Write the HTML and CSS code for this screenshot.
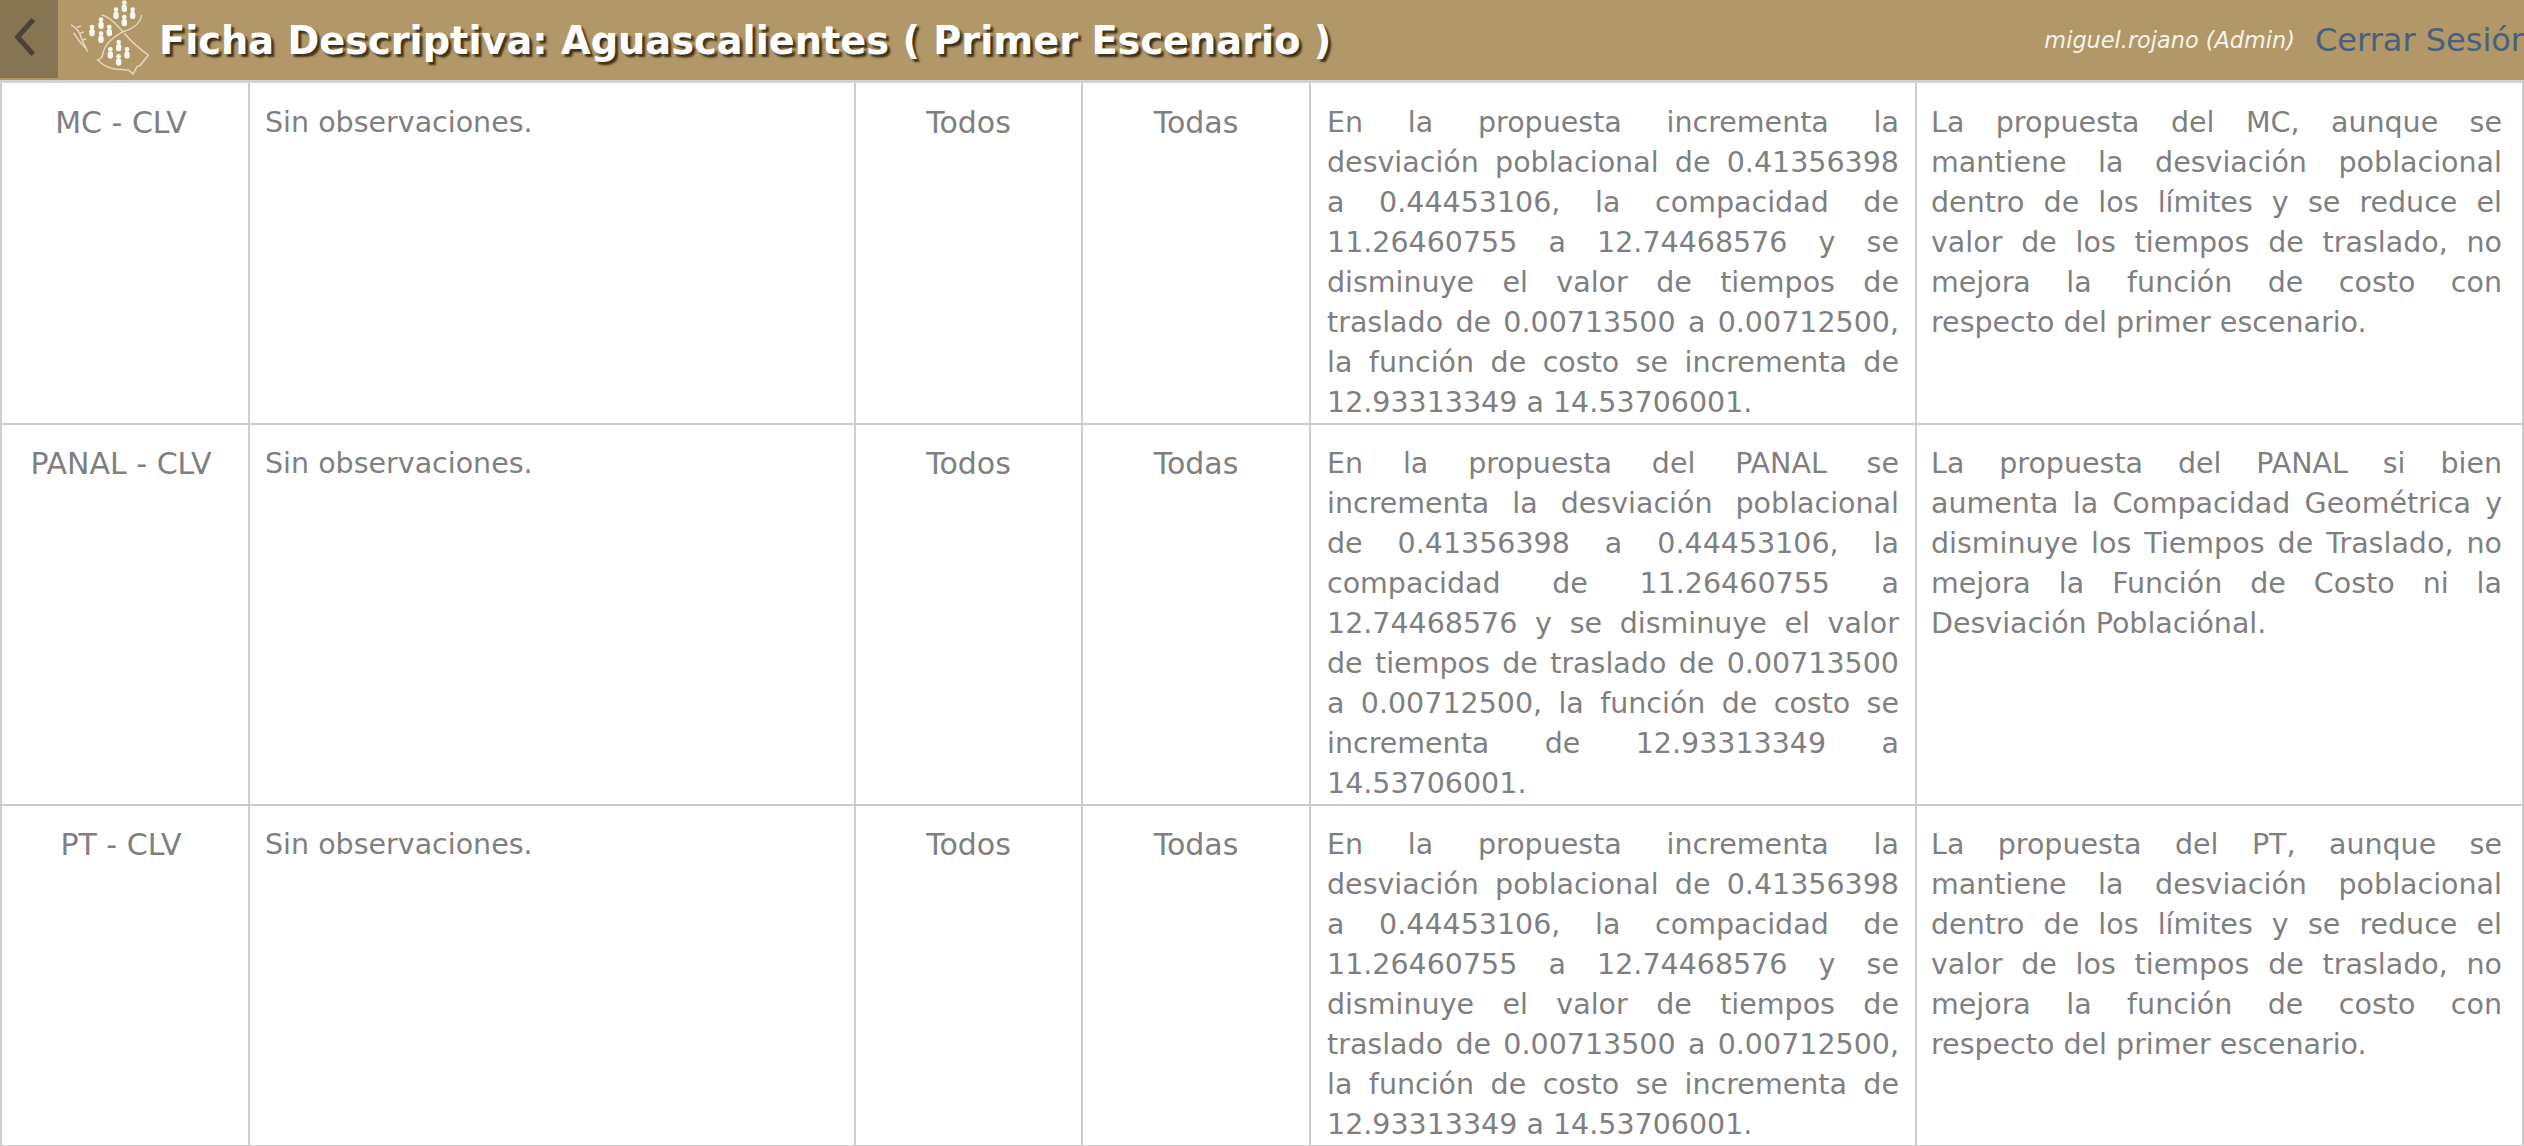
FILE: index.html
```html
<!DOCTYPE html>
<html lang="es">
<head>
<meta charset="utf-8">
<title>Ficha Descriptiva</title>
<link rel="stylesheet" href="styles.css">
</head>
<body>
<header class="bar">
  <a class="back"><svg class="chev" viewBox="0 0 24 44"><path d="M21 3 L4 22 L21 41"/></svg></a>
  <svg class="logo" viewBox="0 0 330 240">
    <g class="logo-line">
      <path d="M30 75 C42 80 52 90 58 105 C64 125 72 140 80 155"/>
      <path d="M38 98 C48 115 60 132 75 145"/>
      <path d="M48 82 L60 78 M56 100 L68 96 M64 120 L76 116"/>
      <path d="M122 45 C150 50 172 82 186 95 C210 88 238 72 242 45"/>
      <path d="M186 95 C150 115 128 135 125 165 C122 175 116 178 110 180 C125 195 140 203 158 206 C175 210 195 207 205 212 L216 222 L228 200 L238 196 L262 165"/>
      <path d="M190 100 C205 118 225 140 262 165"/>
    </g>
    <g class="logo-dot">
      <g><circle cx="190" cy="8" r="7"/><rect x="182" y="14" width="16" height="22" rx="7"/></g>
      <g><circle cx="165" cy="29" r="7"/><rect x="157" y="35" width="16" height="22" rx="7"/></g>
      <g><circle cx="215" cy="29" r="7"/><rect x="207" y="35" width="16" height="22" rx="7"/></g>
      <g><circle cx="190" cy="51" r="7"/><rect x="182" y="57" width="16" height="22" rx="7"/></g>
      <g><circle cx="120" cy="59" r="7"/><rect x="112" y="65" width="16" height="22" rx="7"/></g>
      <g><circle cx="93" cy="81" r="7"/><rect x="85" y="87" width="16" height="22" rx="7"/></g>
      <g><circle cx="145" cy="81" r="7"/><rect x="137" y="87" width="16" height="22" rx="7"/></g>
      <g><circle cx="120" cy="101" r="7"/><rect x="112" y="107" width="16" height="22" rx="7"/></g>
      <g><circle cx="173" cy="126" r="7"/><rect x="165" y="132" width="16" height="22" rx="7"/></g>
      <g><circle cx="148" cy="148" r="7"/><rect x="140" y="154" width="16" height="22" rx="7"/></g>
      <g><circle cx="198" cy="148" r="7"/><rect x="190" y="154" width="16" height="22" rx="7"/></g>
      <g><circle cx="173" cy="169" r="7"/><rect x="165" y="175" width="16" height="22" rx="7"/></g>
    </g>
  </svg>
  <h1 class="title">Ficha Descriptiva: Aguascalientes ( Primer Escenario )</h1>
  <span class="user">miguel.rojano (Admin)</span>
  <a class="logout">Cerrar Sesión</a>
</header>
<table class="grid">
  <colgroup>
    <col class="c1"><col class="c2"><col class="c3"><col class="c4"><col class="c5"><col class="c6">
  </colgroup>
  <tr class="r1 top">
    <td class="mid first">MC - CLV</td>
    <td class="obs">Sin observaciones.</td>
    <td class="mid">Todos</td>
    <td class="mid">Todas</td>
    <td class="just">En la propuesta incrementa la desviación poblacional de 0.41356398 a 0.44453106, la compacidad de 11.26460755 a 12.74468576 y se disminuye el valor de tiempos de traslado de 0.00713500 a 0.00712500, la función de costo se incrementa de 12.93313349 a 14.53706001.</td>
    <td class="just last">La propuesta del MC, aunque se mantiene la desviación poblacional dentro de los límites y se reduce el valor de los tiempos de traslado, no mejora la función de costo con respecto del primer escenario.</td>
  </tr>
  <tr class="r2">
    <td class="mid first">PANAL - CLV</td>
    <td class="obs">Sin observaciones.</td>
    <td class="mid">Todos</td>
    <td class="mid">Todas</td>
    <td class="just">En la propuesta del PANAL se incrementa la desviación poblacional de 0.41356398 a 0.44453106, la compacidad de 11.26460755 a 12.74468576 y se disminuye el valor de tiempos de traslado de 0.00713500 a 0.00712500, la función de costo se incrementa de 12.93313349 a 14.53706001.</td>
    <td class="just last">La propuesta del PANAL si bien aumenta la Compacidad Geométrica y disminuye los Tiempos de Traslado, no mejora la Función de Costo ni la Desviación Poblaciónal.</td>
  </tr>
  <tr class="r1">
    <td class="mid first">PT - CLV</td>
    <td class="obs">Sin observaciones.</td>
    <td class="mid">Todos</td>
    <td class="mid">Todas</td>
    <td class="just">En la propuesta incrementa la desviación poblacional de 0.41356398 a 0.44453106, la compacidad de 11.26460755 a 12.74468576 y se disminuye el valor de tiempos de traslado de 0.00713500 a 0.00712500, la función de costo se incrementa de 12.93313349 a 14.53706001.</td>
    <td class="just last">La propuesta del PT, aunque se mantiene la desviación poblacional dentro de los límites y se reduce el valor de los tiempos de traslado, no mejora la función de costo con respecto del primer escenario.</td>
  </tr>
</table>
</body>
</html>
```
FILE: styles.css
```css
html, body {
  margin: 0;
  padding: 0;
  height: 100%;
  overflow: hidden;
  background: #fff;
  font-family: "DejaVu Sans", Verdana, sans-serif;
}
.bar {
  display: flex;
  align-items: center;
  height: 80px;
  background: #b29769;
  border-bottom: 3px solid #d0d0d0;
  overflow: hidden;
  white-space: nowrap;
}
.back {
  flex: none;
  box-sizing: border-box;
  width: 58px;
  height: 78px;
  padding-left: 14px;
  align-self: flex-start;
  background: #857552;
  display: flex;
  align-items: center;
}
.chev { width: 22px; height: 42px; margin-top: -4px; }
.chev path { fill: none; stroke: #4a4236; stroke-width: 5.500; }
.logo { flex: none; width: 110px; height: 80px; margin-left: 3px; align-self: flex-start; }
.logo-line { fill: none; stroke: #e2d6bc; stroke-width: 4.500; }
.logo-dot { fill: #fbf8f0; }
.title {
  margin: 0 0 0 -12px;
  font-size: 38.300px;
  font-weight: bold;
  color: #fff;
  text-shadow: 3px 3px 2px #3f3319;
}
.user {
  margin-left: auto;
  font-size: 22.400px;
  font-style: italic;
  color: #f7f3ea;
}
.logout {
  flex: none;
  width: 209px;
  margin-left: 20px;
  font-size: 32px;
  color: #47607f;
  overflow: hidden;
}
.grid {
  width: 2522px;
  table-layout: fixed;
  border-collapse: collapse;
  font-size: 28.500px;
  line-height: 40px;
  color: #7f7f7f;
}
.grid td {
  border: 2px solid #cccccc;
  border-top-width: 0;
  padding: 19px 16px 0;
  vertical-align: top;
}
.grid .top td { padding-top: 20px; }
.r1 { height: 340px; }
.r2 { height: 380px; }
.c1 { width: 248px; }
.c2 { width: 606px; }
.c3 { width: 227px; }
.c4 { width: 228px; }
.c5 { width: 606px; }
.c6 { width: 607px; }
.grid .mid { text-align: center; font-size: 30px; }
.grid .first { padding-left: 12px; padding-right: 20px; }
.grid .obs { padding-left: 15px; }
.grid .just { text-align: justify; }
.grid .last { padding-left: 14px; padding-right: 20px; }
```
